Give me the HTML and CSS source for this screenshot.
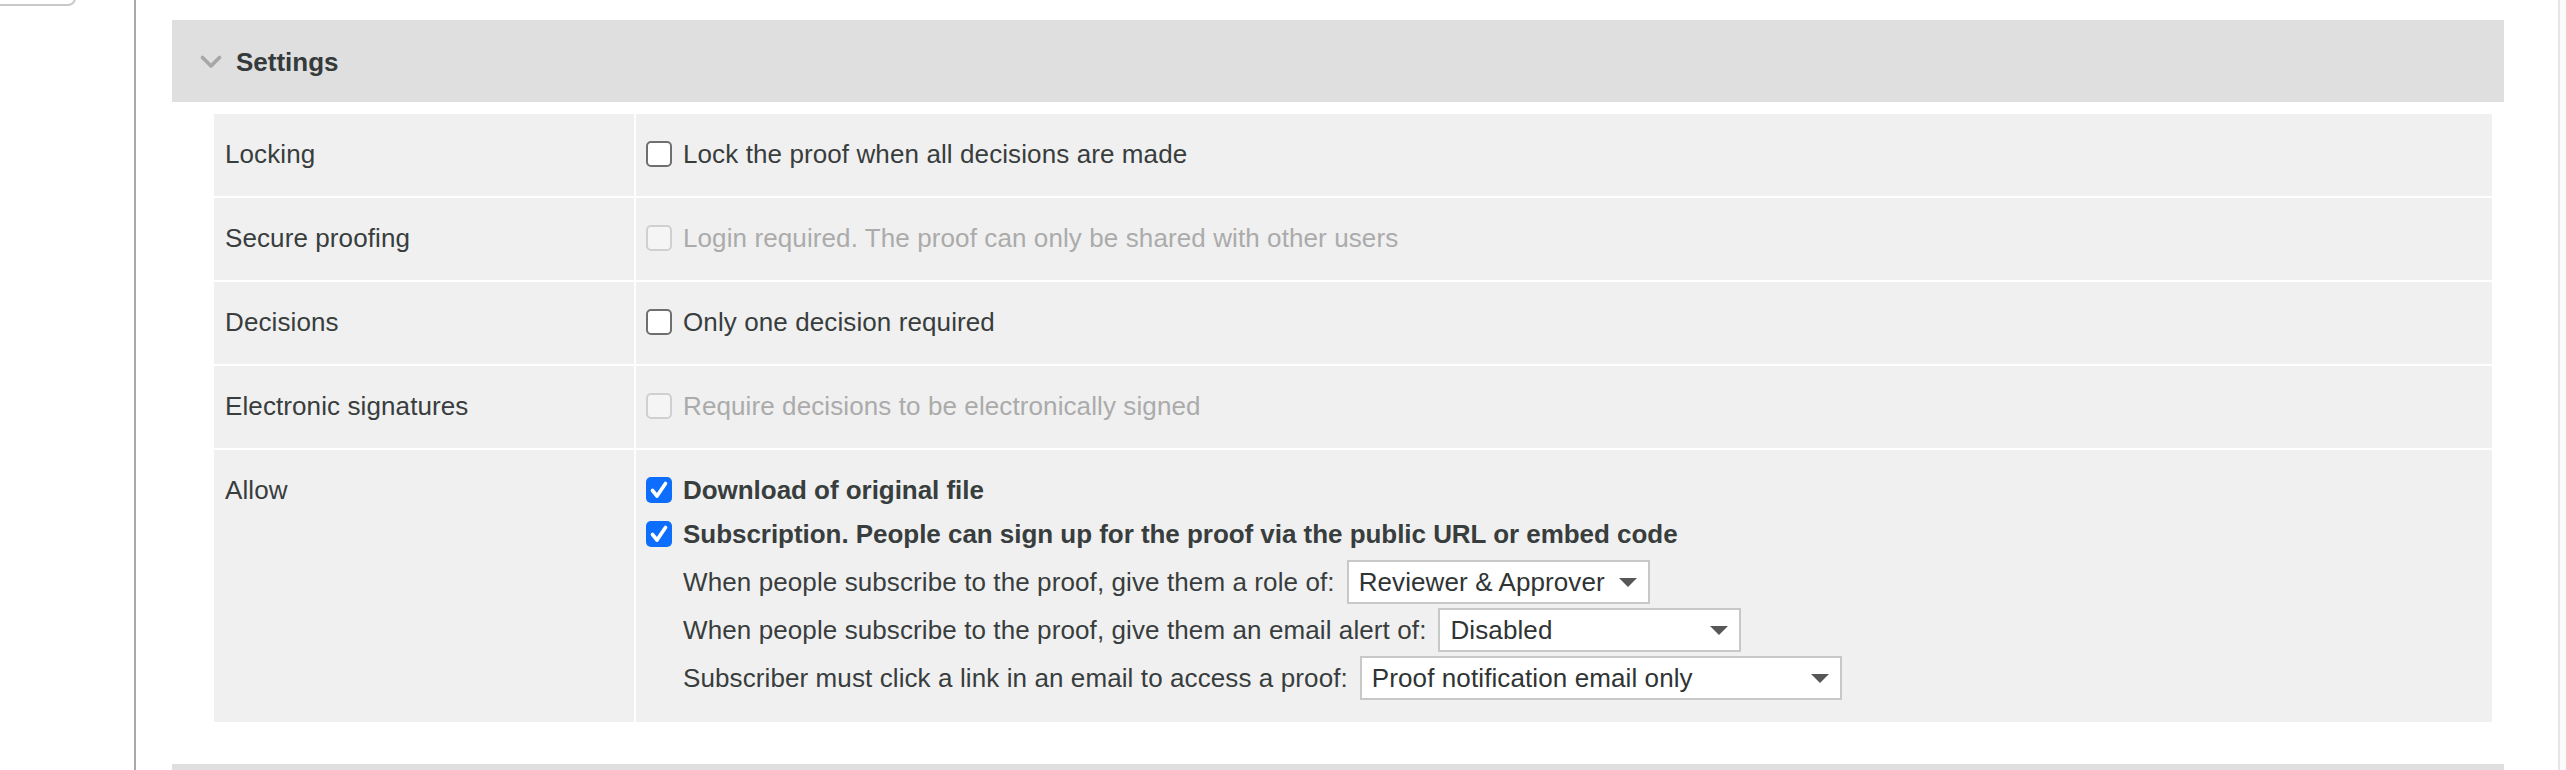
FILE: index.html
```html
<!DOCTYPE html>
<html lang="en">
<head>
<meta charset="utf-8">
<title>Settings</title>
<link rel="stylesheet" href="styles.css">
</head>
<body>
<div class="page">
  <aside class="sidebar">
    <div class="side-button"></div>
  </aside>
  <main class="main">
    <section class="panel">
      <div class="panel-head">
        <svg class="chevron" width="22" height="14" viewBox="0 0 22 14"><polyline points="2.5,2.5 11,11 19.5,2.5" fill="none" stroke="#a7a7a7" stroke-width="3.6" stroke-linecap="round" stroke-linejoin="round"/></svg>
        <span class="panel-title">Settings</span>
      </div>
      <div class="grid">
        <div class="label">Locking</div>
        <div class="value">
          <div class="check-line"><span class="cb"></span><span>Lock the proof when all decisions are made</span></div>
        </div>

        <div class="label">Secure proofing</div>
        <div class="value">
          <div class="check-line disabled"><span class="cb cb-disabled"></span><span>Login required. The proof can only be shared with other users</span></div>
        </div>

        <div class="label">Decisions</div>
        <div class="value">
          <div class="check-line"><span class="cb"></span><span>Only one decision required</span></div>
        </div>

        <div class="label">Electronic signatures</div>
        <div class="value">
          <div class="check-line disabled"><span class="cb cb-disabled"></span><span>Require decisions to be electronically signed</span></div>
        </div>

        <div class="label">Allow</div>
        <div class="value value-allow">
          <div class="check-line strong"><span class="cb cb-checked"><svg width="26" height="26" viewBox="0 0 26 26"><polyline points="6.5,13.5 11,19 19.5,6.5" fill="none" stroke="#fff" stroke-width="3.6" stroke-linecap="round" stroke-linejoin="round"/></svg></span><span>Download of original file</span></div>
          <div class="check-line strong"><span class="cb cb-checked"><svg width="26" height="26" viewBox="0 0 26 26"><polyline points="6.5,13.5 11,19 19.5,6.5" fill="none" stroke="#fff" stroke-width="3.6" stroke-linecap="round" stroke-linejoin="round"/></svg></span><span>Subscription. People can sign up for the proof via the public URL or embed code</span></div>
          <div class="sub-line"><span>When people subscribe to the proof, give them a role of:</span><div class="select sel-role"><span>Reviewer &amp; Approver</span><span class="arrow"></span></div></div>
          <div class="sub-line"><span>When people subscribe to the proof, give them an email alert of:</span><div class="select sel-alert"><span>Disabled</span><span class="arrow"></span></div></div>
          <div class="sub-line"><span>Subscriber must click a link in an email to access a proof:</span><div class="select sel-access"><span>Proof notification email only</span><span class="arrow"></span></div></div>
        </div>
      </div>
    </section>
    <div class="panel-head next-head"></div>
  </main>
  <div class="edge"></div>
</div>
</body>
</html>
```
FILE: styles.css
```css
html, body {
  margin: 0;
  padding: 0;
  background: #ffffff;
  height: 770px;
  overflow: hidden;
}

body {
  font-family: "Liberation Sans", Arial, sans-serif;
  font-size: 26px;
  letter-spacing: 0.1px;
  color: #383d3d;
}

.page {
  display: flex;
  height: 770px;
}

.sidebar {
  width: 134px;
  flex: none;
  border-right: 2px solid #a9a9a9;
  overflow: hidden;
}

.side-button {
  width: 82px;
  height: 38px;
  margin-top: -36px;
  margin-left: -10px;
  border: 2px solid #c9c9c9;
  border-radius: 8px;
  background: #fff;
}

.main {
  flex: 1;
  padding: 20px 54px 0 36px;
  min-width: 0;
}

.panel-head {
  height: 82px;
  background: #dfdfdf;
  display: flex;
  align-items: center;
  padding-left: 28px;
  gap: 14px;
}

.chevron {
  display: block;
  margin-top: 1px;
}

.panel-title {
  font-weight: bold;
  font-size: 26px;
  letter-spacing: 0;
  color: #353a3a;
  line-height: 30px;
  margin-top: 2px;
}

.grid {
  margin: 12px 12px 0 42px;
  display: grid;
  grid-template-columns: 420px 1fr;
  gap: 2px;
  background: #ffffff;
}

.label {
  background: #f0f0f0;
  padding: 25px 11px 27px;
  line-height: 30px;
}

.value {
  background: #f0f0f0;
  padding: 18px 10px 20px;
}

.value-allow {
  padding-bottom: 22px;
}

.check-line {
  display: flex;
  align-items: center;
  gap: 11px;
  height: 44px;
  line-height: 30px;
  white-space: nowrap;
}

.check-line.disabled {
  color: #ababab;
}

.check-line.strong {
  font-weight: bold;
  letter-spacing: -0.04px;
}

.cb {
  width: 26px;
  height: 26px;
  box-sizing: border-box;
  border: 2px solid #6f6f6f;
  border-radius: 5px;
  background: #ffffff;
  flex: none;
  display: block;
}

.cb-disabled {
  border-color: #d0d0d0;
  background: #f5f5f5;
}

.cb-checked {
  border: none;
  background: #0d6efd;
}

.cb-checked svg {
  display: block;
}

.sub-line {
  display: flex;
  align-items: center;
  gap: 12px;
  margin-left: 37px;
  margin-top: 4px;
  height: 44px;
  white-space: nowrap;
}

.select {
  height: 44px;
  box-sizing: border-box;
  border: 2px solid #c8c8c8;
  background: #ffffff;
  display: flex;
  align-items: center;
  justify-content: space-between;
  padding: 0 11px 0 10px;
  color: #2f3434;
  flex: none;
}

.sel-role { width: 303px; }
.sel-alert { width: 303px; }
.sel-access { width: 482px; }

.arrow {
  width: 0;
  height: 0;
  border-left: 9px solid transparent;
  border-right: 9px solid transparent;
  border-top: 9px solid #575757;
  flex: none;
}

.next-head {
  margin-top: 42px;
}

.edge {
  width: 6px;
  flex: none;
  border-left: 2px solid #e6e6e6;
  background: #fafafa;
}
```
